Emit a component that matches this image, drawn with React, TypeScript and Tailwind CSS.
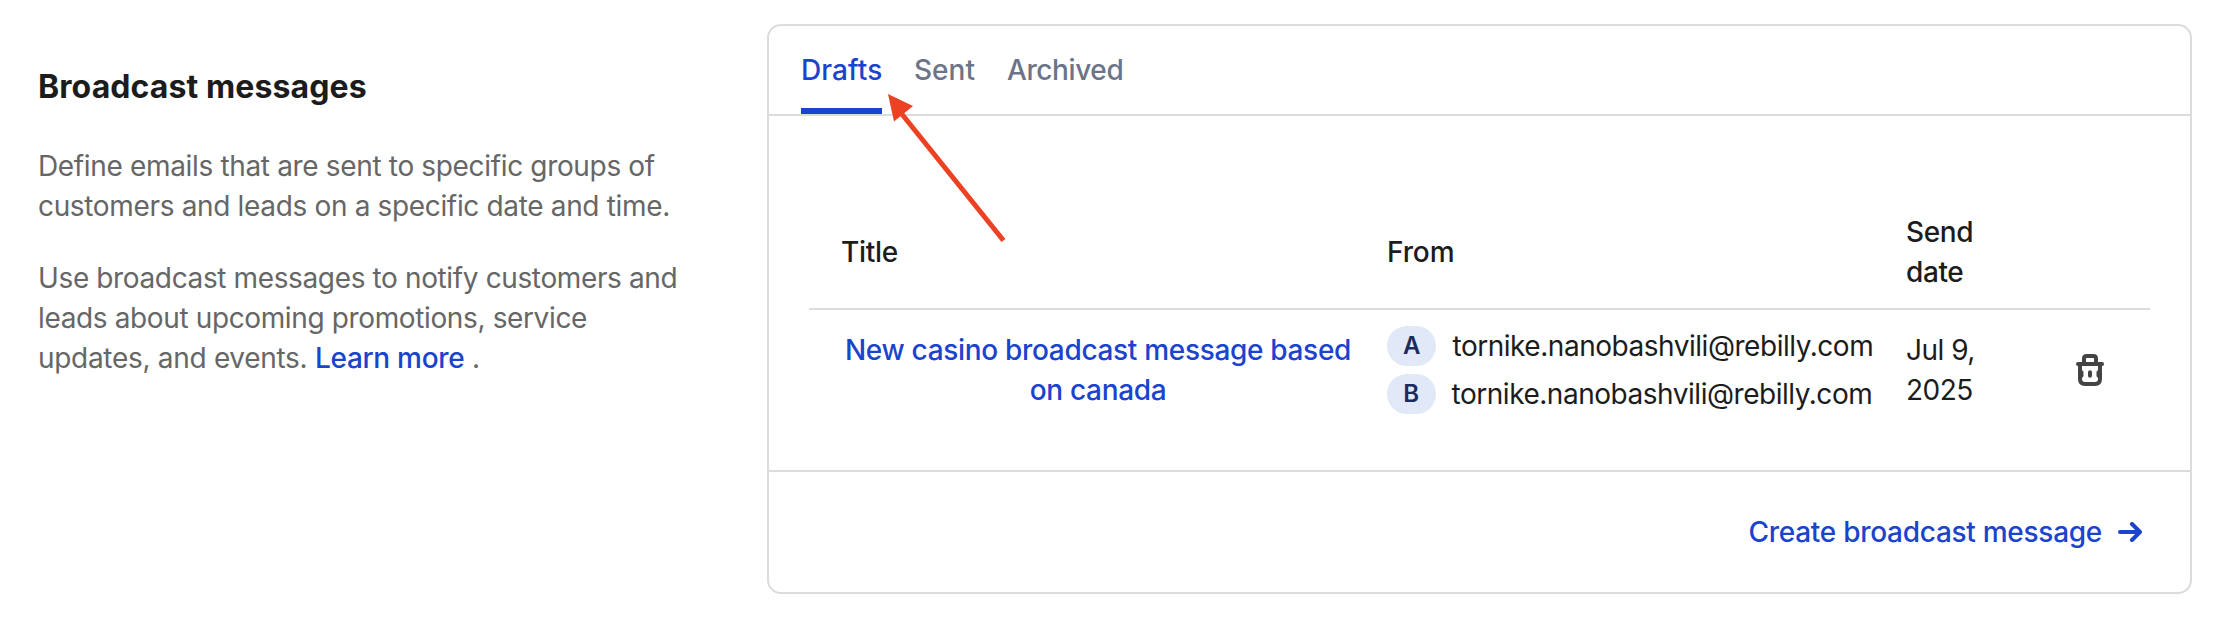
const senders = [
  { badge: "A", email: "tornike.nanobashvili@rebilly.com" },
  { badge: "B", email: "tornike.nanobashvili@rebilly.com" },
];

function TrashIcon() {
  return (
    <svg width="28" height="32" viewBox="0 0 28 32" fill="none" stroke="#444" strokeWidth="4" strokeLinecap="round" strokeLinejoin="round">
      <path d="M2 10H26" />
      <path d="M8 9V4.500Q8 2 10.500 2H17.500Q20 2 20 4.500V9" />
      <path d="M4 11V25Q4 30 9 30H19Q24 30 24 25V11" />
      <path d="M14 18.300V21.700M5.500 18.300V21.700M22.500 18.300V21.700" />
    </svg>
  );
}

function ArrowRightIcon() {
  return (
    <svg width="24" height="20" viewBox="0 0 24 20" fill="none" stroke="currentColor" strokeWidth="4" strokeLinecap="round" strokeLinejoin="round">
      <path d="M2 10H21M14 2L22 10L14 18" />
    </svg>
  );
}

export default function App() {
  return (
    <div className="flex h-[640px] w-[2214px] bg-white pt-6 font-['Inter',sans-serif] text-[28px] leading-10 text-[#1c1c1c]">
      <aside className="w-[729px] shrink-0 pt-[43px] pl-[38px] whitespace-nowrap text-[#666]">
        <h1 className="text-[32px] leading-10 font-bold tracking-[0.1px] text-[#1c1c1c]">Broadcast messages</h1>
        <p className="mt-[39px] tracking-[-0.34px]">
          Define emails that are sent to specific groups of
          <br />
          customers and leads on a specific date and time.
        </p>
        <p className="mt-8 tracking-[-0.37px]">
          Use broadcast messages to notify customers and
          <br />
          leads about upcoming promotions, service
          <br />
          <span className="tracking-[-0.3px]">updates, and events. </span>
          <a className="font-medium tracking-[-0.3px] text-[#1a43ce]">Learn more</a> .
        </p>
      </aside>

      <main className="relative ml-[38px] h-[570px] w-[1425px] rounded-[14px] border-2 border-[#dcdcdc]">
        <nav className="flex h-[90px] gap-8 border-b-2 border-[#dcdcdc] pt-6 pl-8 font-medium whitespace-nowrap text-[#6b7488]">
          <a className="h-16 w-[81px] border-b-[6px] border-[#1a43ce] tracking-[0.1px] text-[#1a43ce]">Drafts</a>
          <a className="w-[61px]">Sent</a>
          <a className="tracking-[-0.4px]">Archived</a>
        </nav>

        <section className="h-[356px] border-b-2 border-[#dcdcdc] px-10 pt-20">
          <div className="grid h-[114px] grid-cols-[578px_519px_1fr] items-center border-b-2 border-[#dcdcdc] pl-[33px] font-medium">
            <div className="-ml-px w-[545px] tracking-[-0.3px]">Title</div>
            <div className="-ml-[33px] tracking-[-0.1px]">From</div>
            <div className="-ml-[33px] w-24 tracking-[-0.4px]">Send date</div>
          </div>
          <div className="flex items-center pt-4 pl-[33px]">
            <a className="w-[512px] text-center font-medium tracking-[-0.32px] text-[#1a43ce]">
              New casino broadcast message based
              <br />
              on canada
            </a>
            <div className="ml-[33px] flex w-[519px] flex-col gap-2">
              {senders.map((s) => (
                <div key={s.badge} className="flex h-10 items-center gap-4">
                  <span className="flex h-10 min-w-[48.500px] items-center justify-center rounded-[20px] bg-[#e1e9f9] px-4 text-[24px] font-semibold text-[#1c2b5c]">{s.badge}</span>
                  <span className="tracking-[-0.47px]">{s.email}</span>
                </div>
              ))}
            </div>
            <div className="w-[170px] tracking-[-0.5px]">
              Jul 9,
              <br />
              2025
            </div>
            <TrashIcon />
          </div>
        </section>

        <footer className="flex items-center justify-end gap-4 pt-10 pr-12 font-medium tracking-[-0.28px] text-[#1a43ce]">
          <span>Create broadcast message</span>
          <ArrowRightIcon />
        </footer>

        <svg className="absolute top-[66px] left-[117px]" width="130" height="156" viewBox="0 0 130 156">
          <path d="M15 21L117.500 148.500" stroke="#ed4124" strokeWidth="5" />
          <path d="M2 2L27 14L8 29.500Z" fill="#ed4124" />
        </svg>
      </main>
    </div>
  );
}
